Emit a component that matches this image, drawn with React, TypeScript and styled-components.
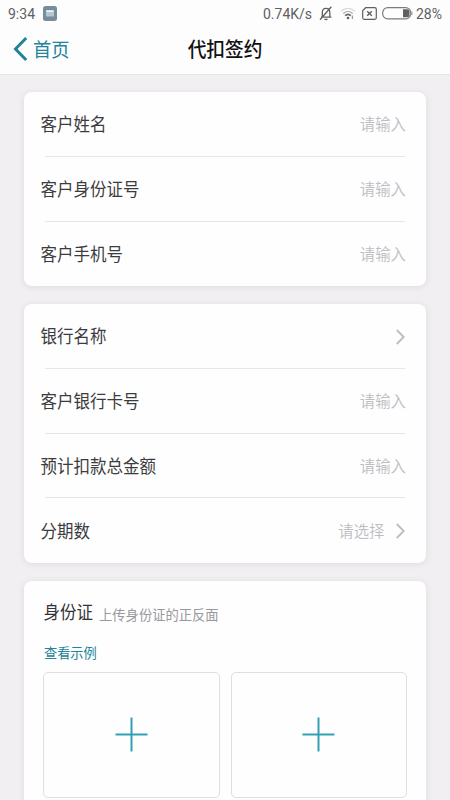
import React from "react";
import styled, { createGlobalStyle } from "styled-components";

const GlobalStyle = createGlobalStyle`
  * { box-sizing: border-box; }
  body {
    margin: 0;
    background: #f1eff2;
    font-family: "Noto Sans CJK SC", sans-serif;
  }
`;

const Screen = styled.div`
  width: 450px;
  height: 800px;
  overflow: hidden;
  background: #f1eff2;
`;

const Header = styled.header`
  height: 75px;
  background: #fdfdfe;
  border-bottom: 1px solid #e6e5e7;
`;

const StatusBar = styled.div`
  display: flex;
  align-items: center;
  justify-content: space-between;
  height: 28px;
  padding: 0 7px 0 8px;
  font-family: Roboto, sans-serif;
  font-size: 14px;
  color: #606062;
`;

const StatusGroup = styled.div`
  display: flex;
  align-items: center;
  svg { display: block; flex: none; }
`;

const StatusText = styled.span<{ $width: number }>`
  width: ${(p) => p.$width}px;
  white-space: nowrap;
  line-height: 28px;
`;

const NavBar = styled.div`
  display: grid;
  grid-template-columns: 1fr auto 1fr;
  align-items: center;
  height: 42px;
`;

const BackButton = styled.div`
  display: flex;
  align-items: center;
  gap: 5px;
  padding-left: 13px;
  font-size: 18.3px;
  line-height: 28px;
  color: #23839a;
`;

const TallText = styled.span`
  display: inline-block;
  transform: translateY(-1px) scaleY(1.07);
`;

const Title = styled.h1`
  margin: 0;
  font-size: 18.7px;
  font-weight: 500;
  line-height: 28px;
  color: #111113;
`;

const Content = styled.main`
  display: flex;
  flex-direction: column;
  gap: 17.6px;
  padding: 17px 24px 0;
`;

const Card = styled.section`
  padding: 0 20px 0 16.5px;
  border-radius: 8px;
  background: #fefefe;
  box-shadow: 0 1px 7px rgba(70, 60, 80, 0.11);
`;

const Row = styled.div`
  display: flex;
  align-items: center;
  justify-content: space-between;
  height: 64.8px;
`;

const Divider = styled.div`
  height: 1px;
  margin: -1px 1.5px 0 4.5px;
  background: #e7e6e9;
`;

const Label = styled.span`
  font-size: 16.5px;
  line-height: 24px;
  color: #3c3c40;
  transform: scaleY(1.07);
`;

const Value = styled.span`
  display: flex;
  align-items: center;
  gap: 11px;
  font-size: 15.4px;
  font-weight: 350;
  line-height: 24px;
  color: #bfbdc4;
`;

const ArrowSlot = styled.span`
  display: flex;
  padding: 1px 1.5px 0 0;
`;

const UploadCard = styled(Card)`
  height: 260px;
  padding: 18px 19px 0 19px;
`;

const UploadHeading = styled.div`
  display: flex;
  align-items: baseline;
  gap: 6px;
  height: 46px;
  padding-left: 0.5px;
  font-size: 16.5px;
  line-height: 28px;
  color: #333337;
`;

const Hint = styled.span`
  font-size: 13.3px;
  color: #99989d;
  transform: scaleY(1.05);
`;

const ExampleLink = styled.div`
  height: 27px;
  padding-left: 1px;
  font-size: 13.2px;
  line-height: 18px;
  color: #23859a;
`;

const UploadGrid = styled.div`
  display: grid;
  grid-template-columns: 1fr 1fr;
  gap: 11px;
`;

const UploadBox = styled.div`
  display: flex;
  align-items: center;
  justify-content: center;
  height: 126px;
  border: 1px solid #dfdee2;
  border-radius: 5px;
`;

const Chevron = () => (
  <ArrowSlot>
    <svg width="9" height="16" viewBox="0 0 9 16" fill="none" stroke="#bdbdc0" strokeWidth="1.8">
      <path d="M.8 1 7.7 8 .8 15" />
    </svg>
  </ArrowSlot>
);

const AppBadge = () => (
  <svg width="14" height="15" viewBox="0 0 14 15">
    <rect width="14" height="15" rx="2.5" fill="#788d9b" />
    <rect x="3" y="4" width="8" height="6.5" rx=".6" fill="#b6c6d0" />
    <path d="M3.5 5.2h7" stroke="#edf3f6" strokeWidth="1.6" />
  </svg>
);

const MutedBell = () => (
  <svg width="14" height="15" viewBox="0 0 14 15" fill="none" stroke="#606062" strokeWidth="1.3">
    <path d="M2 11.2h10.3M3.3 11V6.4C3.3 3.8 4.8 2.3 7 2.3s3.8 1.5 3.8 4.1V11M5.6 12.9c.6 1 2.2 1 2.8 0M12.3.8 1 13.8" />
  </svg>
);

const WifiIcon = () => (
  <svg width="16" height="13" viewBox="0 0 16 13" fill="none" strokeWidth="1.3">
    <path d="M1.2 4.1C5.2.4 10.8.4 14.8 4.1" stroke="#dadadd" />
    <path d="M3.3 6.6c2.8-2.6 6.6-2.6 9.4 0" stroke="#a9a9ac" />
    <path d="M5.2 8.7c1.7-1.6 3.9-1.6 5.6 0" stroke="#606062" strokeWidth="1.8" />
    <circle cx="8" cy="11" r="1.3" fill="#606062" />
    <path d="M12.4 8.5V12" stroke="#99999c" />
  </svg>
);

const SimIcon = () => (
  <svg width="15" height="13" viewBox="0 0 15 13" fill="none" stroke="#606062" strokeWidth="1.2">
    <path d="M3.7.7h9.1c.9 0 1.5.6 1.5 1.5v8.6c0 .9-.6 1.5-1.5 1.5H2.2c-.9 0-1.5-.6-1.5-1.5V3.6z" />
    <path d="m5.2 4.2 4.6 4.6M9.8 4.2 5.2 8.8" strokeWidth="1.4" />
  </svg>
);

const BatteryIcon = () => (
  <svg width="31" height="13" viewBox="0 0 31 13">
    <rect x=".7" y=".7" width="28" height="11.2" rx="5" fill="none" stroke="#7c7c7e" strokeWidth="1.2" />
    <path d="M21 2.3h4.2c1.5 0 2.3 1 2.3 2.2v3.6c0 1.3-.8 2.2-2.3 2.2H21z" fill="#606062" />
    <path d="M29.9 4.5v3.6" stroke="#88888a" strokeWidth="1" />
  </svg>
);

const PlusIcon = () => (
  <svg width="33" height="35" viewBox="0 0 33 35" fill="none" stroke="#32a0b3" strokeWidth="2">
    <path d="M0.5 17.5h32M16.5.5v34" />
  </svg>
);

const IconSlot = styled.span<{ $width: number }>`
  display: flex;
  width: ${(p) => p.$width}px;
  padding-bottom: 1px;
`;

type FieldProps = { label: string; value?: string; arrow?: boolean };

const Field = ({ label, value, arrow }: FieldProps) => (
  <Row>
    <Label>{label}</Label>
    <Value>
      {value && <TallText>{value}</TallText>}
      {arrow && <Chevron />}
    </Value>
  </Row>
);

const FieldCard = ({ fields }: { fields: FieldProps[] }) => (
  <Card>
    {fields.map((field, i) => (
      <React.Fragment key={field.label}>
        {i > 0 && <Divider />}
        <Field {...field} />
      </React.Fragment>
    ))}
  </Card>
);

const customerFields: FieldProps[] = [
  { label: "客户姓名", value: "请输入" },
  { label: "客户身份证号", value: "请输入" },
  { label: "客户手机号", value: "请输入" },
];

const bankFields: FieldProps[] = [
  { label: "银行名称", arrow: true },
  { label: "客户银行卡号", value: "请输入" },
  { label: "预计扣款总金额", value: "请输入" },
  { label: "分期数", value: "请选择", arrow: true },
];

export default function App() {
  return (
    <Screen>
      <GlobalStyle />
      <Header>
        <StatusBar>
          <StatusGroup>
            <StatusText $width={35}>9:34</StatusText>
            <IconSlot $width={14}><AppBadge /></IconSlot>
          </StatusGroup>
          <StatusGroup>
            <StatusText $width={56}>0.74K/s</StatusText>
            <IconSlot $width={21}><MutedBell /></IconSlot>
            <IconSlot $width={22}><WifiIcon /></IconSlot>
            <IconSlot $width={20}><SimIcon /></IconSlot>
            <IconSlot $width={34}><BatteryIcon /></IconSlot>
            <StatusText $width={27}>28%</StatusText>
          </StatusGroup>
        </StatusBar>
        <NavBar>
          <BackButton>
            <svg width="15" height="24" viewBox="0 0 15 24" fill="none" stroke="#23839a" strokeWidth="3">
              <path d="M13.2 1 2.5 12l10.7 11" />
            </svg>
            <TallText>首页</TallText>
          </BackButton>
          <Title><TallText>代扣签约</TallText></Title>
        </NavBar>
      </Header>
      <Content>
        <FieldCard fields={customerFields} />
        <FieldCard fields={bankFields} />
        <UploadCard>
          <UploadHeading>
            <TallText>身份证</TallText>
            <Hint>上传身份证的正反面</Hint>
          </UploadHeading>
          <ExampleLink><TallText>查看示例</TallText></ExampleLink>
          <UploadGrid>
            <UploadBox><PlusIcon /></UploadBox>
            <UploadBox><PlusIcon /></UploadBox>
          </UploadGrid>
        </UploadCard>
      </Content>
    </Screen>
  );
}
